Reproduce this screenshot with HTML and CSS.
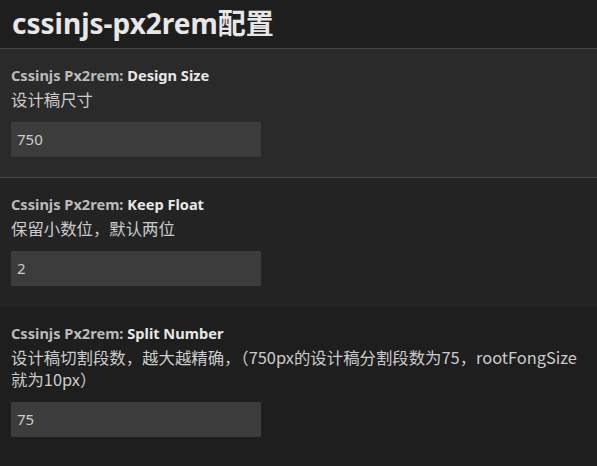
FILE: index.html
```html
<!DOCTYPE html>
<html lang="zh-CN">
<head>
<meta charset="utf-8">
<title>cssinjs-px2rem配置</title>
<link rel="stylesheet" href="styles.css">
</head>
<body>
<header class="header">
  <h1 class="title">cssinjs-px2rem配置</h1>
</header>
<main class="settings">
  <section class="setting setting-a">
    <div class="label"><span class="cat">Cssinjs Px2rem: </span><span class="name">Design Size</span></div>
    <div class="desc">设计稿尺寸</div>
    <div class="input">750</div>
  </section>
  <section class="setting setting-b">
    <div class="label"><span class="cat">Cssinjs Px2rem: </span><span class="name">Keep Float</span></div>
    <div class="desc">保留小数位，默认两位</div>
    <div class="input">2</div>
  </section>
  <section class="setting setting-c">
    <div class="label"><span class="cat">Cssinjs Px2rem: </span><span class="name">Split Number</span></div>
    <div class="desc">设计稿切割段数，越大越精确，（750px的设计稿分割段数为75，rootFongSize就为10px）</div>
    <div class="input">75</div>
  </section>
</main>
</body>
</html>
```
FILE: styles.css
```css
html, body {
  margin: 0;
  padding: 0;
  background: #1e1e1e;
  height: 100%;
}
body {
  font-family: "Noto Sans", "Noto Sans CJK SC", sans-serif;
  color: #cccccc;
}
.header {
  height: 49px;
  box-sizing: border-box;
  padding-left: 12px;
  border-bottom: 1px solid #474747;
  display: flex;
  align-items: center;
}
.title {
  margin: 0;
  font-size: 28px;
  font-weight: 700;
  color: #e7e7e7;
  line-height: 34px;
  padding-bottom: 2px;
}
.setting {
  padding: 17px 11px 20px;
}
.setting-a {
  background: #2a2a2a;
  border-bottom: 1px solid #474747;
}
.setting-b {
  background: #232323;
  padding-bottom: 21px;
}
.setting-c {
  background: #1e1e1e;
}
.label {
  font-size: 14.6px;
  font-weight: 700;
  line-height: 19px;
  margin-bottom: 3px;
}
.cat {
  color: #bbbbbb;
}
.name {
  color: #e7e7e7;
}
.desc {
  font-family: "Noto Sans CJK SC", sans-serif;
  font-size: 16.4px;
  line-height: 22px;
  color: #cccccc;
  margin-bottom: 12px;
}
.input {
  width: 250px;
  height: 35px;
  box-sizing: border-box;
  background: #3c3c3c;
  padding-left: 6px;
  font-size: 15px;
  line-height: 35px;
  color: #cccccc;
}
```
